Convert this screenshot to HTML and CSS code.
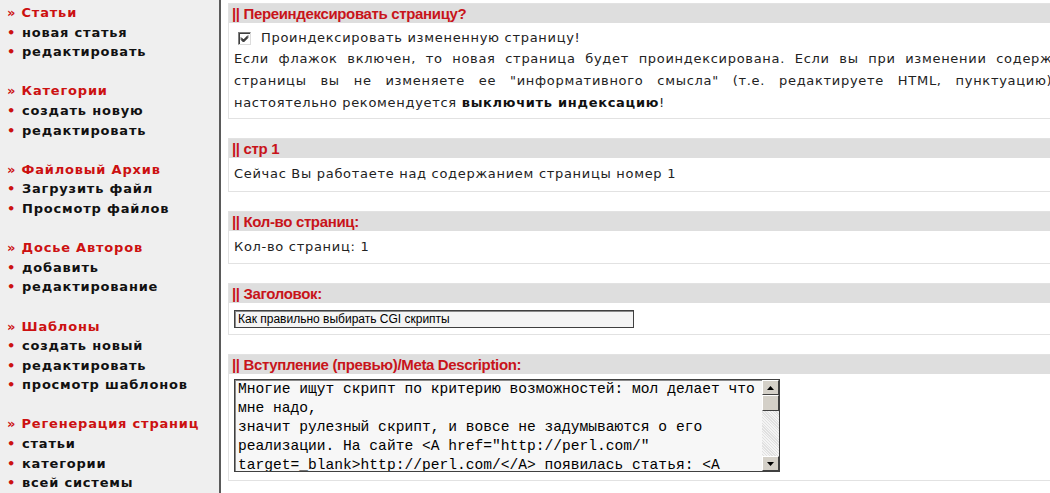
FILE: index.html
```html
<!DOCTYPE html>
<html lang="ru">
<head>
<meta charset="utf-8">
<title>Редактирование статьи</title>
<link rel="stylesheet" href="styles.css">
</head>
<body>
<div class="page">
  <nav class="sidebar">
    <div class="group">
      <div class="group-title">» Статьи</div>
      <div class="item"><span class="dot">•</span>новая статья</div>
      <div class="item"><span class="dot">•</span>редактировать</div>
    </div>
    <div class="group">
      <div class="group-title">» Категории</div>
      <div class="item"><span class="dot">•</span>создать новую</div>
      <div class="item"><span class="dot">•</span>редактировать</div>
    </div>
    <div class="group">
      <div class="group-title">» Файловый Архив</div>
      <div class="item"><span class="dot">•</span>Загрузить файл</div>
      <div class="item"><span class="dot">•</span>Просмотр файлов</div>
    </div>
    <div class="group">
      <div class="group-title">» Досье Авторов</div>
      <div class="item"><span class="dot">•</span>добавить</div>
      <div class="item"><span class="dot">•</span>редактирование</div>
    </div>
    <div class="group">
      <div class="group-title">» Шаблоны</div>
      <div class="item"><span class="dot">•</span>создать новый</div>
      <div class="item"><span class="dot">•</span>редактировать</div>
      <div class="item"><span class="dot">•</span>просмотр шаблонов</div>
    </div>
    <div class="group">
      <div class="group-title">» Регенерация страниц</div>
      <div class="item"><span class="dot">•</span>статьи</div>
      <div class="item"><span class="dot">•</span>категории</div>
      <div class="item"><span class="dot">•</span>всей системы</div>
    </div>
  </nav>
  <main class="main">
    <section class="box">
      <div class="box-head">|| Переиндексировать страницу?</div>
      <div class="box-body first">
        <label class="check-line"><span class="checkbox"><svg width="9" height="9" viewBox="0 0 9 9"><path d="M1 3.5 L3.5 6 L8 1.5 M1 4.5 L3.5 7 L8 2.5 M1 5.5 L3.5 8 L8 3.5" stroke="#000" stroke-width="1" fill="none"/></svg></span>Проиндексировать измененную страницу!</label>
        <p class="justify">Если флажок включен, то новая страница будет проиндексирована. Если вы при изменении содержания страницы вы не изменяете ее "информативного смысла" (т.е. редактируете HTML, пунктуацию), то настоятельно рекомендуется <b>выключить индексацию</b>!</p>
      </div>
    </section>
    <section class="box">
      <div class="box-head">|| стр 1</div>
      <div class="box-body">Сейчас Вы работаете над содержанием страницы номер 1</div>
    </section>
    <section class="box">
      <div class="box-head">|| Кол-во страниц:</div>
      <div class="box-body">Кол-во страниц: 1</div>
    </section>
    <section class="box">
      <div class="box-head">|| Заголовок:</div>
      <div class="box-body"><div class="text-input">Как правильно выбирать CGI скрипты</div></div>
    </section>
    <section class="box">
      <div class="box-head">|| Вступление (превью)/Meta Description:</div>
      <div class="box-body">
        <div class="textarea">
          <div class="ta-text">Многие ищут скрипт по критерию возможностей: мол делает что<br>мне надо,<br>значит рулезный скрипт, и вовсе не задумываются о его<br>реализации. На сайте &lt;A href="http://perl.com/"<br>target=_blank&gt;http://perl.com/&lt;/A&gt; появилась статья: &lt;A</div>
          <div class="scrollbar">
            <div class="sb-btn"><svg width="7" height="4" viewBox="0 0 7 4"><path d="M3.5 0 L7 4 L0 4 Z" fill="#000"/></svg></div>
            <div class="sb-thumb"></div>
            <div class="sb-track"></div>
            <div class="sb-btn"><svg width="7" height="4" viewBox="0 0 7 4"><path d="M0 0 L7 0 L3.5 4 Z" fill="#000"/></svg></div>
          </div>
        </div>
      </div>
    </section>
  </main>
</div>
</body>
</html>
```
FILE: styles.css
```css
html, body {
  margin: 0;
  padding: 0;
  background: #fff;
  overflow: hidden;
}
.page {
  display: flex;
  align-items: stretch;
  width: 1100px;
  min-height: 493px;
}
.sidebar {
  width: 212px;
  flex: none;
  background: #efefef;
  border-right: 2px solid #5a5a5a;
  padding: 3px 0 0 7px;
  font-family: "DejaVu Sans", Verdana, sans-serif;
  font-weight: bold;
  font-size: 13px;
  letter-spacing: 0.8px;
  line-height: 19.6px;
  color: #111;
  white-space: nowrap;
}
.group {
  margin-bottom: 19.6px;
}
.group-title {
  color: #cc1111;
}
.dot {
  color: #cc1111;
  display: inline-block;
  width: 15px;
  letter-spacing: 0;
}
.main {
  flex: none;
  width: 866px;
  padding: 3px 0 0 7px;
  font-family: "DejaVu Sans", Verdana, sans-serif;
  font-size: 13px;
  letter-spacing: 0.7px;
  color: #222;
}
.box {
  border: 1px solid #e2e2e2;
  margin-bottom: 19px;
}
.box-head {
  background: #dedede;
  height: 19px;
  line-height: 19px;
  padding-left: 3px;
  font-family: "Liberation Sans", Arial, sans-serif;
  font-weight: bold;
  font-size: 15px;
  letter-spacing: -0.35px;
  color: #c8141a;
}
.box-body {
  padding: 5px 5px 6px 5px;
  line-height: 21.5px;
}
.box-body.first {
  padding-bottom: 4px;
}
.check-line {
  display: flex;
  align-items: center;
  height: 20px;
}
.checkbox {
  width: 11px;
  height: 11px;
  border: 1px solid #7f7f7f;
  border-right-color: #dcdcdc;
  border-bottom-color: #dcdcdc;
  box-shadow: inset 1px 1px 0 #404040;
  background: #fff;
  margin: 0 10px 0 4px;
  display: flex;
  align-items: center;
  justify-content: center;
}
.justify {
  margin: 0;
  line-height: 22px;
  text-align: justify;
}
.justify b {
  color: #111;
}
.text-input {
  width: 392px;
  height: 16px;
  border: 1px solid #404040;
  box-shadow: inset 1px 1px 0 #8a8a8a;
  background: #f4f4f4;
  font-family: "Liberation Sans", Arial, sans-serif;
  font-size: 12px;
  letter-spacing: 0;
  line-height: 16px;
  padding: 0 3px;
  color: #000;
  margin: 2px 0 0 0;
}
.textarea {
  display: flex;
  width: 544px;
  height: 91px;
  border: 1px solid #404040;
  box-shadow: inset 1px 1px 0 #8a8a8a;
  background: #f7f7f7;
  margin: 0 0 2px 0;
}
.ta-text {
  flex: 1;
  font-family: "Liberation Mono", "Courier New", monospace;
  font-size: 14.6px;
  letter-spacing: 0;
  line-height: 19px;
  padding: 0 3px;
  color: #000;
  overflow: hidden;
  white-space: nowrap;
}
.scrollbar {
  width: 17px;
  display: flex;
  flex-direction: column;
  background: #e9e9e9;
}
.sb-btn {
  height: 15px;
  background: #d4d0c8;
  border: 1px solid #fff;
  border-right-color: #404040;
  border-bottom-color: #404040;
  display: flex;
  align-items: center;
  justify-content: center;
  box-sizing: border-box;
}
.sb-thumb {
  height: 16px;
  background: #d4d0c8;
  border: 1px solid #fff;
  border-right-color: #404040;
  border-bottom-color: #404040;
  box-sizing: border-box;
}
.sb-track {
  flex: 1;
  background: repeating-linear-gradient(45deg, #f4f4f4 0 1px, #e0e0e0 1px 2px);
}
```
